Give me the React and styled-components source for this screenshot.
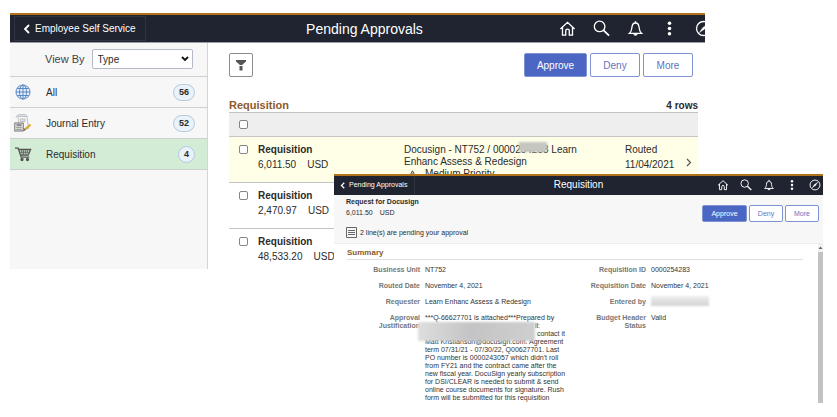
import React from 'react';
import styled, { createGlobalStyle, css } from 'styled-components';

const GlobalStyle = createGlobalStyle`
  * {
    box-sizing: border-box;
  }

  body {
    margin: 0;
    background: #fff;
    color: #2b2b2b;
    font-family: 'Liberation Sans', Arial, sans-serif;
    font-size: 10px;
  }

  h1, h2, p, dl, dd, ul {
    margin: 0;
    padding: 0;
  }

  button, input, select {
    font-family: inherit;
  }
`;

const Desktop = styled.main`
  position: relative;
  min-height: 100vh;
  padding: 13px 132px 0 10px;
`;

const ListWindow = styled.section`
  overflow: hidden;
`;

const Header = styled.header`
  display: grid;
  grid-template-columns: 1fr auto 1fr;
  align-items: center;
  width: ${(props) => (props.$small ? '100%' : 'calc(100% + 14px)')};
  height: ${(props) => (props.$small ? 21 : 30)}px;
  background: #1f2430;
  border-top: 2px solid #b0731c;
  border-bottom: 1px solid ${(props) => (props.$small ? '#1f2430' : '#9a9cab')};
`;

const BackLink = styled.a`
  display: flex;
  align-items: center;
  justify-self: start;
  gap: 5px;
  height: 25px;
  margin-left: 4px;
  padding: 0 9px 0 8px;
  border: 1px solid #303542;
  color: #fff;
  font-size: 10px;
  text-decoration: none;
  white-space: nowrap;

  ${(props) =>
    props.$small &&
    css`
      gap: 4px;
      height: 18px;
      margin-left: 0;
      padding: 0 7px 0 6px;
      border-width: 0 1px 0 0;
      font-size: 7px;
    `}
`;

const WindowTitle = styled.h1`
  color: #fff;
  font-size: ${(props) => (props.$small ? 10 : 14)}px;
  font-weight: 400;
  white-space: nowrap;
`;

const HeaderIcons = styled.nav`
  display: flex;
  justify-content: flex-end;
  gap: ${(props) => (props.$small ? 11 : 17)}px;
  margin-right: ${(props) => (props.$small ? 2 : 7)}px;
`;

const IconButton = styled.button`
  display: flex;
  flex: none;
  padding: 0;
  border: 0;
  background: none;
  color: #fff;
`;

const Body = styled.div`
  display: grid;
  grid-template-columns: 198px 1fr;
`;

const Sidebar = styled.aside`
  background: #f7f7f7;
  border-right: 1px solid #d5d5d5;
`;

const ViewBy = styled.label`
  display: flex;
  align-items: center;
  gap: 7px;
  height: 33px;
  padding: 0 14px 1px 35px;
  color: #444;
  font-size: 11px;
  white-space: nowrap;
`;

const SelectBox = styled.span`
  position: relative;
  flex: 1;

  svg {
    position: absolute;
    top: 7px;
    right: 4px;
    pointer-events: none;
  }
`;

const Select = styled.select`
  display: block;
  width: 100%;
  height: 20px;
  padding: 0 5px;
  appearance: none;
  background: #fff;
  border: 1px solid #b4bac8;
  border-radius: 2px;
  color: #2b2b2b;
  font-size: 10px;
`;

const TypeList = styled.ul`
  list-style: none;
  border-bottom: 1px solid #cfcfcf;
`;

const TypeItem = styled.li`
  display: grid;
  grid-template-columns: 18px 1fr auto;
  align-items: center;
  gap: 14px;
  height: 31px;
  padding: 0 12px 0 4px;
  background: ${(props) => (props.$active ? '#d3ecd6' : 'transparent')};
  border-top: 1px solid #cfcfcf;
`;

const Count = styled.span`
  min-width: ${(props) => (props.$narrow ? 17 : 22)}px;
  border: 1px solid #b3c9de;
  border-radius: 9px;
  background: #e9f1f9;
  font-size: 9px;
  font-weight: 700;
  line-height: 15px;
  text-align: center;
`;

const Content = styled.section`
  padding: 10px 7px 0 21px;
`;

const Toolbar = styled.div`
  display: flex;
  justify-content: space-between;
  padding-right: 5px;
`;

const FilterButton = styled.button`
  display: flex;
  align-items: center;
  justify-content: center;
  width: 24px;
  height: 24px;
  padding: 0;
  background: #fff;
  border: 1px solid #8c8c8c;
  border-radius: 2px;
`;

const Actions = styled.div`
  display: flex;
  gap: ${(props) => (props.$small ? 2 : 3)}px;
`;

const ActionButton = styled.button`
  width: ${(props) => (props.$primary ? 63 : 50)}px;
  height: 24px;
  padding: 0;
  background: ${(props) => (props.$primary ? '#4c66c4' : '#fff')};
  border: 1px solid #7f92d2;
  border-radius: 2px;
  color: ${(props) => (props.$primary ? '#fff' : '#5f74c0')};
  font-size: 10px;

  ${(props) =>
    props.$small &&
    css`
      width: ${props.$primary ? 45 : 34}px;
      height: 17px;
      font-size: 7px;
    `}
`;

const GridTitle = styled.div`
  display: flex;
  align-items: flex-end;
  justify-content: space-between;
  height: 35px;
  padding-bottom: 1px;
  font-weight: 700;
`;

const SectionTitle = styled.h2`
  color: #8d5a2b;
  font-size: ${(props) => (props.$small ? 8 : 11)}px;
  font-weight: 700;
`;

const SelectAll = styled.div`
  height: 24px;
  padding: 7px 10px;
  background: #eee;
  border-top: 1px solid #c4c4c4;
`;

const Checkbox = styled.input`
  display: block;
  width: 9px;
  height: 9px;
  margin: 0;
  appearance: none;
  background: #fff;
  border: 1px solid #858585;
  border-radius: 2px;
`;

const ApprovalRow = styled.article`
  display: grid;
  grid-template-columns: 9px 136px 1fr 51px 10px;
  gap: 10px;
  height: ${(props) => (props.$last ? 41 : 46)}px;
  padding: 5px 2px 0 10px;
  overflow: hidden;
  background: ${(props) => (props.$active ? '#ffffe8' : '#fff')};
  border-top: 1px solid #c4c4c4;
  line-height: 15px;

  ${Checkbox} {
    margin-top: 3px;
  }
`;

const Amount = styled.p`
  display: flex;
  gap: ${(props) => (props.$small ? 7 : 11)}px;
`;

const Description = styled.div`
  padding-top: 2px;
  line-height: 12px;
  white-space: nowrap;
`;

const Priority = styled.p`
  display: flex;
  align-items: center;
  gap: 8px;
  padding-left: 4px;
`;

const Redacted = styled.span`
  position: relative;

  &::after {
    content: '';
    position: absolute;
    inset: -2px -4px 3px -2px;
    background: #c6c6c1;
    filter: blur(1px);
  }
`;

const Chevron = styled.span`
  display: flex;
  align-self: center;
`;

const Overlay = styled.section`
  position: absolute;
  top: 174px;
  right: 14px;
  left: 334px;
  background: #fff;
  font-size: 7px;
  line-height: 8px;
`;

const Intro = styled.div`
  display: flex;
  justify-content: space-between;
  height: 49px;
  padding: 3px 4px 0 12px;
  background: #f7f7f7;
  border-bottom: 1px solid #eee;
`;

const IntroText = styled.div`
  display: flex;
  flex-direction: column;
  gap: 3px;
`;

const Lines = styled.p`
  display: flex;
  align-items: center;
  gap: 3px;
  margin-top: 7px;
`;

const ActionsHolder = styled.div`
  padding-top: 7px;
`;

const DetailBody = styled.div`
  display: flex;
  height: 159px;
  overflow: hidden;
`;

const Summary = styled.div`
  flex: 1;
  padding: 5px 15px 0 13px;
`;

const SummaryTitle = styled.div`
  height: 11px;
  border-bottom: 1px solid #ddd;
`;

const Columns = styled.div`
  display: grid;
  grid-template-columns: 226px 1fr;
  padding-top: 6px;
`;

const Fields = styled.dl`
  display: grid;
  grid-template-columns: 73px 1fr;
  align-content: start;
  gap: 8px 5px;

  dt {
    color: #777;
    font-weight: 700;
    text-align: right;
  }

  dd {
    color: #333;
    white-space: nowrap;
  }
`;

const Justification = styled.dd`
  position: relative;
`;

const Gap = styled.span`
  display: inline-block;
  width: 110px;
`;

const Smudge = styled.span`
  display: block;
  position: absolute;
  top: 8px;
  left: -7px;
  width: 117px;
  height: 19px;
  background: linear-gradient(90deg, #dedede, #c4c4c6 45%, #cfcfcf);
  filter: blur(1px);
`;

const NameSmudge = styled.span`
  display: block;
  width: 58px;
  height: 10px;
  margin: -2px 0 0;
  background: linear-gradient(#efefef, #d2d2d2);
  filter: blur(1px);
`;

const Scrollbar = styled.div`
  display: flex;
  flex-direction: column;
  width: 5px;
  background: #c2c2c2;

  svg {
    background: #f1f1f1;
  }
`;

const Icon = ({ size = 18, children, ...rest }) => (
  <svg
    width={size}
    height={size}
    viewBox="0 0 18 18"
    fill="none"
    stroke="currentColor"
    strokeWidth="1.4"
    aria-hidden="true"
    {...rest}
  >
    {children}
  </svg>
);

const BackChevron = ({ small }) => (
  <svg
    width={small ? 5 : 7}
    height={small ? 7 : 10}
    viewBox="0 0 7 10"
    fill="none"
    stroke="#fff"
    strokeWidth="1.8"
    aria-hidden="true"
  >
    <path d="M6 1 2 5l4 4" />
  </svg>
);

const headerIcons = [
  {
    label: 'Home',
    drawing: (
      <path d="M1.5 9.5 9 2.5l7.500 7M3.700 7.500v8.500h3.400v-4.500a1.900 1.900 0 0 1 3.800 0V16h3.400V7.500" />
    ),
  },
  {
    label: 'Search',
    drawing: (
      <>
        <circle cx="7" cy="6.8" r="5.6" />
        <path d="m11 10.800 6 5.700" strokeWidth="1.9" />
      </>
    ),
  },
  {
    label: 'Notifications',
    drawing: (
      <>
        <path d="M2.500 14.200C4.500 12.500 5 11 5.200 8c.2-3 1.600-4.800 3.800-4.800s3.600 1.800 3.800 4.800c.2 3 .7 4.500 2.700 6.200Z" />
        <path d="M9 1.200v2" />
        <path d="M7.200 14.800h3.600c0 2-3.600 2-3.600 0Z" fill="currentColor" strokeWidth="0.8" />
      </>
    ),
  },
  {
    label: 'Actions',
    drawing: (
      <g fill="currentColor" stroke="none">
        <circle cx="9" cy="3.5" r="1.9" />
        <circle cx="9" cy="9" r="1.9" />
        <circle cx="9" cy="14.5" r="1.9" />
      </g>
    ),
  },
  {
    label: 'NavBar',
    drawing: (
      <>
        <circle cx="9" cy="9" r="7.4" />
        <path d="m13.600 4.400-3.700 5.500-5.500 3.700 3.700-5.500Z" fill="currentColor" strokeWidth="0.3" />
      </>
    ),
  },
];

const WindowHeader = ({ back, title, small }) => (
  <Header $small={small}>
    <BackLink href="#back" $small={small}>
      <BackChevron small={small} />
      {back}
    </BackLink>
    <WindowTitle $small={small}>{title}</WindowTitle>
    <HeaderIcons $small={small}>
      {headerIcons.map(({ label, drawing }) => (
        <IconButton key={label} aria-label={label}>
          <Icon size={small ? 12 : 17}>{drawing}</Icon>
        </IconButton>
      ))}
    </HeaderIcons>
  </Header>
);

const ApprovalActions = ({ small }) => (
  <Actions $small={small}>
    <ActionButton $primary $small={small}>
      Approve
    </ActionButton>
    <ActionButton $small={small}>Deny</ActionButton>
    <ActionButton $small={small}>More</ActionButton>
  </Actions>
);

const GlobeIcon = () => (
  <Icon stroke="#5a88c4" strokeWidth="1">
    <circle cx="9" cy="9" r="7" fill="#e6f0fb" />
    <ellipse cx="9" cy="9" rx="3.5" ry="7" />
    <path d="M9 2v14M2 9h14M3.200 5.500h11.600M3.200 12.500h11.600" />
  </Icon>
);

const JournalIcon = () => (
  <Icon stroke="#b5b5b5" strokeWidth="0.8">
    <path d="M4 2.500h9l1.500 12H5Z" fill="#f6f6f6" />
    <path d="M2 3.500C2.500 1.500 4 .8 6 .8h5.500L13 2.500" stroke="#8ba0b8" />
    <path d="M6.500 5h4.500v2.500h-4.500Z" fill="#dbe4ee" />
    <rect x="0.8" y="9" width="8.4" height="8" fill="#e8e8e8" stroke="#555" />
    <path d="M2.500 11h5" stroke="#555" strokeWidth="1.2" />
    <path d="M2.500 13.300h5M2.500 15.300h5" stroke="#555" strokeWidth="1.1" strokeDasharray="1.2 .7" />
    <path d="m11 15.500 5.500-5" stroke="#e0a527" strokeWidth="2" />
    <path d="m9.800 16.700 1.500-1.500" stroke="#555" strokeWidth="1.2" />
  </Icon>
);

const CartIcon = () => (
  <Icon stroke="#555" strokeWidth="1.3">
    <path d="M1 3.200h3.200l3 9h8" />
    <path d="M4.600 4.500h12l-2.400 5.700H6.500" />
    <path d="m7.300 4.500 1 5.700M9.300 4.500l.4 5.700M11.400 4.500l-.2 5.700M13.600 4.500l-.8 5.700M5.500 7.200h10" strokeWidth="0.8" />
    <circle cx="8" cy="14.5" r="1" fill="#555" />
    <circle cx="13.5" cy="14.5" r="1" fill="#555" />
  </Icon>
);

const types = [
  { name: 'All', count: 56, icon: <GlobeIcon /> },
  { name: 'Journal Entry', count: 52, icon: <JournalIcon /> },
  { name: 'Requisition', count: 4, icon: <CartIcon />, active: true },
];

const PendingApprovals = () => (
  <ListWindow>
    <WindowHeader back="Employee Self Service" title="Pending Approvals" />
    <Body>
      <Sidebar>
        <ViewBy>
          View By
          <SelectBox>
            <Select defaultValue="Type">
              <option>Type</option>
            </Select>
            <svg width="8" height="6" viewBox="0 0 8 6" fill="none" stroke="#111" strokeWidth="1.8" aria-hidden="true">
              <path d="m1 1 3 3 3-3" />
            </svg>
          </SelectBox>
        </ViewBy>
        <TypeList>
          {types.map(({ name, count, icon, active }) => (
            <TypeItem key={name} $active={active}>
              {icon}
              {name}
              <Count $narrow={count < 10}>{count}</Count>
            </TypeItem>
          ))}
        </TypeList>
      </Sidebar>
      <Content>
        <Toolbar>
          <FilterButton aria-label="Filter">
            <svg width="12" height="12" viewBox="0 0 12 12" fill="#555" aria-hidden="true">
              <path d="M1 1h10v1.500L7.500 5.500v6h-3v-6L1 2.500Z" />
              <path d="M4 6.500h4" stroke="#fff" />
            </svg>
          </FilterButton>
          <ApprovalActions />
        </Toolbar>
        <GridTitle>
          <SectionTitle>Requisition</SectionTitle>
          <span>4 rows</span>
        </GridTitle>
        <SelectAll>
          <Checkbox type="checkbox" aria-label="Select all" />
        </SelectAll>
        <ApprovalRow $active>
          <Checkbox type="checkbox" aria-label="Select 6,011.50 USD" />
          <div>
            <b>Requisition</b>
            <Amount>
              <span>6,011.50</span>
              <span>USD</span>
            </Amount>
          </div>
          <Description>
            <p>
              Docusign - NT752 / 00002<Redacted>5428</Redacted>3 Learn
            </p>
            <p>Enhanc Assess &amp; Redesign</p>
            <Priority>
              <svg width="9" height="9" viewBox="0 0 9 9" fill="none" stroke="#444" aria-hidden="true">
                <path d="M4.500.8 8.500 8.300h-8ZM4.500 3.500v2.300M4.500 6.500v1" />
              </svg>
              Medium Priority
            </Priority>
          </Description>
          <div>
            Routed
            <br />
            11/04/2021
          </div>
          <Chevron>
            <svg width="6" height="9" viewBox="0 0 6 9" fill="none" stroke="#555" strokeWidth="1.2" aria-hidden="true">
              <path d="m1 1 3.500 3.500L1 8" />
            </svg>
          </Chevron>
        </ApprovalRow>
        <ApprovalRow>
          <Checkbox type="checkbox" aria-label="Select 2,470.97 USD" />
          <div>
            <b>Requisition</b>
            <Amount>
              <span>2,470.97</span>
              <span>USD</span>
            </Amount>
          </div>
        </ApprovalRow>
        <ApprovalRow $last>
          <Checkbox type="checkbox" aria-label="Select 48,533.20 USD" />
          <div>
            <b>Requisition</b>
            <Amount>
              <span>48,533.20</span>
              <span>USD</span>
            </Amount>
          </div>
        </ApprovalRow>
      </Content>
    </Body>
  </ListWindow>
);

const RequisitionDetail = () => (
  <Overlay>
    <WindowHeader back="Pending Approvals" title="Requisition" small />
    <Intro>
      <IntroText>
        <b>Request for Docusign</b>
        <Amount $small>
          <span>6,011.50</span>
          <span>USD</span>
        </Amount>
        <Lines>
          <svg width="11" height="11" viewBox="0 0 11 11" fill="none" stroke="#666" aria-hidden="true">
            <path d="M.5.5h10v10H.5ZM2 3.500h7M2 5.500h7M2 7.500h7" />
          </svg>
          2 line(s) are pending your approval
        </Lines>
      </IntroText>
      <ActionsHolder>
        <ApprovalActions small />
      </ActionsHolder>
    </Intro>
    <DetailBody>
      <Summary>
        <SummaryTitle>
          <SectionTitle $small>Summary</SectionTitle>
        </SummaryTitle>
        <Columns>
          <Fields>
            <dt>Business Unit</dt>
            <dd>NT752</dd>
            <dt>Routed Date</dt>
            <dd>November 4, 2021</dd>
            <dt>Requester</dt>
            <dd>Learn Enhanc Assess &amp; Redesign</dd>
            <dt>Approval Justification</dt>
            <Justification>
              ***Q-66627701 is attached***Prepared by
              <br />
              <Gap />
              il:
              <br />
              <Gap /> contact it
              <br />
              Matt Kristianson@docusign.com. Agreement
              <br />
              term 07/31/21 - 07/30/22, Q00627701. Last
              <br />
              PO number is 0000243057 which didn't roll
              <br />
              from FY21 and the contract came after the
              <br />
              new fiscal year. DocuSign yearly subscription
              <br />
              for DSI/CLEAR is needed to submit &amp; send
              <br />
              online course documents for signature. Rush
              <br />
              form will be submitted for this requisition
              <Smudge />
            </Justification>
          </Fields>
          <Fields>
            <dt>Requisition ID</dt>
            <dd>0000254283</dd>
            <dt>Requisition Date</dt>
            <dd>November 4, 2021</dd>
            <dt>Entered by</dt>
            <dd>
              <NameSmudge />
            </dd>
            <dt>Budget Header Status</dt>
            <dd>Valid</dd>
          </Fields>
        </Columns>
      </Summary>
      <Scrollbar>
        <svg width="5" height="8" viewBox="0 0 5 8" fill="#666" aria-hidden="true">
          <path d="m.5 5 2-2.500 2 2.500Z" />
        </svg>
      </Scrollbar>
    </DetailBody>
  </Overlay>
);

const App = () => (
  <>
    <GlobalStyle />
    <Desktop>
      <PendingApprovals />
      <RequisitionDetail />
    </Desktop>
  </>
);

export default App;
